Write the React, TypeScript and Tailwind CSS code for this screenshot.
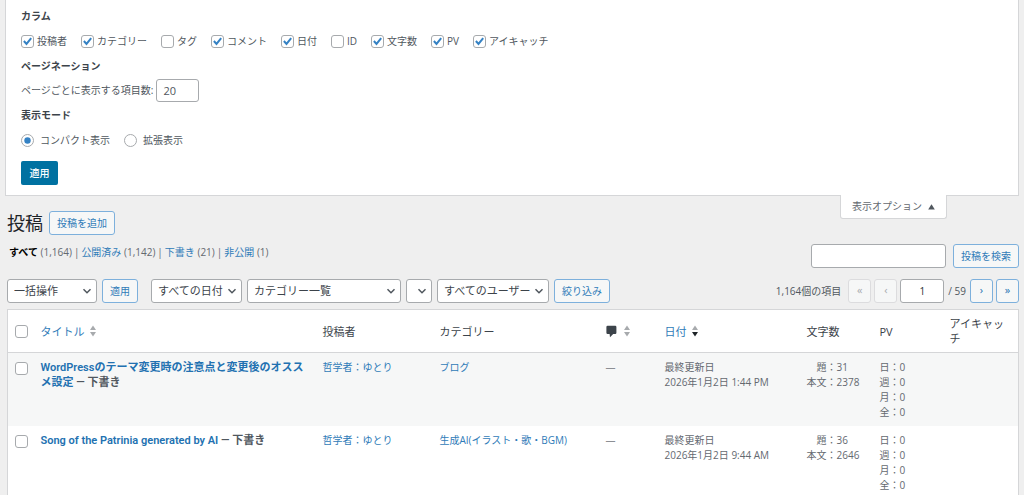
import React, { useState } from 'react';

const columnOptions = [
  { id: 'author', label: '投稿者', checked: true },
  { id: 'categories', label: 'カテゴリー', checked: true },
  { id: 'tags', label: 'タグ', checked: false },
  { id: 'comments', label: 'コメント', checked: true },
  { id: 'date', label: '日付', checked: true },
  { id: 'post-id', label: 'ID', checked: false },
  { id: 'count', label: '文字数', checked: true },
  { id: 'pv', label: 'PV', checked: true },
  { id: 'thumbnail', label: 'アイキャッチ', checked: true },
];

const views = [
  { label: 'すべて', count: '(1,164)', current: true },
  { label: '公開済み', count: '(1,142)' },
  { label: '下書き', count: '(21)' },
  { label: '非公開', count: '(1)' },
];

interface Post {
  id: number;
  title: string;
  category: string;
  date: string;
  titleCount: number;
  bodyCount: number;
}

const posts: Post[] = [
  {
    id: 1,
    title: 'WordPressのテーマ変更時の注意点と変更後のオススメ設定',
    category: 'ブログ',
    date: '2026年1月2日 1:44 PM',
    titleCount: 31,
    bodyCount: 2378,
  },
  {
    id: 2,
    title: 'Song of the Patrinia generated by AI',
    category: '生成AI(イラスト・歌・BGM)',
    date: '2026年1月2日 9:44 AM',
    titleCount: 36,
    bodyCount: 2646,
  },
];

const buttonClass =
  'h-6 shrink-0 rounded-[3px] border border-[#7db0dc] bg-[#f6f7f7] px-[7px] text-[10px] text-[#2f7bb8] whitespace-nowrap';

const Checkbox = ({ id, defaultChecked = false, label }: { id: string; defaultChecked?: boolean; label?: string }) => (
  <span className="relative block h-[13px] w-[13px] shrink-0">
    <input
      id={id}
      type="checkbox"
      aria-label={label}
      defaultChecked={defaultChecked}
      className="peer block h-[13px] w-[13px] appearance-none rounded-[3px] border border-[#a7aaad] bg-white"
    />
    <svg viewBox="0 0 13 13" className="pointer-events-none absolute inset-0 hidden h-full w-full peer-checked:block">
      <path d="M2.9 6 L5.5 9 L10.2 3.2" fill="none" stroke="#3582c4" strokeWidth="2" />
    </svg>
  </span>
);

const Radio = ({ id, defaultChecked = false }: { id: string; defaultChecked?: boolean }) => (
  <span className="relative block h-[13px] w-[13px] shrink-0">
    <input
      id={id}
      type="radio"
      name="mode"
      defaultChecked={defaultChecked}
      className="peer block h-[13px] w-[13px] appearance-none rounded-full border border-[#a7aaad] bg-white"
    />
    <svg viewBox="0 0 13 13" className="pointer-events-none absolute inset-0 hidden h-full w-full peer-checked:block">
      <circle cx="6.5" cy="6.5" r="3.2" fill="#3582c4" />
    </svg>
  </span>
);

const Select = ({ label, options, className }: { label: string; options: string[]; className: string }) => (
  <span className={`relative block h-6 shrink-0 ${className}`}>
    <select
      aria-label={label}
      className="block h-full w-full appearance-none rounded-[3px] border border-[#a7aaad] bg-white pl-1.5 text-[11px] text-[#3c434a]"
    >
      {options.map((option) => (
        <option key={option}>{option}</option>
      ))}
    </select>
    <svg viewBox="0 0 10 10" className="pointer-events-none absolute top-[7px] right-[5px] h-2.5 w-2.5">
      <path d="M1.5 3.2 L5 6.7 L8.5 3.2" fill="none" stroke="#50575e" strokeWidth="1.5" />
    </svg>
  </span>
);

const SortArrows = ({ down = false }: { down?: boolean }) => (
  <svg viewBox="0 0 8 12" className="h-3 w-2 shrink-0">
    <path d="M4 0.5 L7 5 H1 Z" fill="#a7aaad" />
    <path d="M4 11.5 L7 7 H1 Z" fill={down ? '#1d2327' : '#a7aaad'} />
  </svg>
);

const ScreenOptions = () => (
  <form className="mx-[5px] border border-t-0 border-[#d5d6d8] bg-white px-[15px] pt-1.5 pb-[10px] text-[10px] text-[#50575e]">
    <h2 className="h-5 leading-5 font-bold text-[#3c434a]">カラム</h2>
    <div className="flex h-[30px] items-center gap-3.5">
      {columnOptions.map((column) => (
        <div key={column.id} className="flex items-center gap-[3px]">
          <Checkbox id={column.id} defaultChecked={column.checked} />
          <label htmlFor={column.id}>{column.label}</label>
        </div>
      ))}
    </div>
    <h2 className="h-5 leading-5 font-bold text-[#3c434a]">ページネーション</h2>
    <div className="flex h-[29px] items-center gap-[3px]">
      <label htmlFor="per-page">ページごとに表示する項目数:</label>
      <input
        id="per-page"
        type="text"
        defaultValue="20"
        className="h-[23px] w-[43px] rounded-[3px] border border-[#a7aaad] px-1.5 text-[11px]"
      />
    </div>
    <h2 className="h-5 leading-5 font-bold text-[#3c434a]">表示モード</h2>
    <div className="flex h-[30px] items-center gap-3.5">
      <div className="flex items-center gap-1.5">
        <Radio id="compact" defaultChecked />
        <label htmlFor="compact">コンパクト表示</label>
      </div>
      <div className="flex items-center gap-1.5">
        <Radio id="extended" />
        <label htmlFor="extended">拡張表示</label>
      </div>
    </div>
    <button type="button" className="mt-1.5 block h-6 w-[37px] rounded-[2px] bg-[#0071a1] text-[10px] font-medium text-white">
      適用
    </button>
  </form>
);

const Pagination = () => (
  <div className="ml-auto flex items-center gap-[3px] text-[10px] text-[#50575e]">
    <span className="mr-1 whitespace-nowrap">1,164個の項目</span>
    {['«', '‹'].map((mark) => (
      <button key={mark} disabled className="h-6 w-[23px] rounded-[3px] border border-[#dcdcde] bg-[#f6f7f7] pb-0.5 text-[11px] text-[#a7aaad]">
        {mark}
      </button>
    ))}
    <input
      type="text"
      aria-label="現在のページ"
      defaultValue="1"
      className="h-6 w-11 rounded-[3px] border border-[#a7aaad] bg-white text-center text-[#2c3338]"
    />
    <span className="px-px whitespace-nowrap">/ 59</span>
    {['›', '»'].map((mark) => (
      <button key={mark} className="h-6 w-[23px] rounded-[3px] border border-[#7db0dc] bg-[#f6f7f7] pb-0.5 text-[11px] text-[#2271b1]">
        {mark}
      </button>
    ))}
  </div>
);

const PostsTable = () => (
  <table className="mt-1.5 w-full table-fixed border-collapse border border-[#d5d6d8] bg-white text-left text-[10px] leading-[15px] text-[#646970]">
    <colgroup>
      <col className="w-[26px]" />
      <col />
      <col className="w-[117px]" />
      <col className="w-[166px]" />
      <col className="w-[59px]" />
      <col className="w-[142px]" />
      <col className="w-[73px]" />
      <col className="w-[70px]" />
      <col className="w-[76px]" />
    </colgroup>
    <thead>
      <tr className="h-[43px] border-b border-[#d5d6d8] text-[11px] text-[#3c434a] [&>th]:px-[7px] [&>th]:font-normal">
        <th>
          <Checkbox id="select-all" label="すべて選択" />
        </th>
        <th>
          <a href="#title" className="flex items-center gap-1 text-[#2f7bb8]">
            タイトル
            <SortArrows />
          </a>
        </th>
        <th>投稿者</th>
        <th>カテゴリー</th>
        <th>
          <a href="#comments" aria-label="コメント" className="flex items-center gap-1.5">
            <svg viewBox="0 0 11 13" className="h-[13px] w-[11px] shrink-0">
              <path d="M1.6 0.8 H9.2 Q10.4 0.8 10.4 2 V7.8 Q10.4 9 9.2 9 H7.2 L4 12.2 L3.6 9 H1.6 Q0.4 9 0.4 7.8 V2 Q0.4 0.8 1.6 0.8 Z" fill="#3c434a" />
            </svg>
            <SortArrows />
          </a>
        </th>
        <th>
          <a href="#date" className="flex items-center gap-1 text-[#2f7bb8]">
            日付
            <SortArrows down />
          </a>
        </th>
        <th>文字数</th>
        <th>PV</th>
        <th>アイキャッチ</th>
      </tr>
    </thead>
    <tbody>
      {posts.map((post) => (
        <tr key={post.id} className="h-[73px] align-top odd:bg-[#f6f7f7] [&>td]:px-[7px] [&>td]:pt-[7px] [&>td]:pb-1.5">
          <td>
            <div className="pt-0.5">
              <Checkbox id={`post-${post.id}`} label={post.title} />
            </div>
          </td>
          <td className="font-['Roboto','Noto_Sans_CJK_JP',sans-serif] text-[11px] font-semibold text-[#50575e]">
            <a href="#edit" className="text-[#2271b1]">{post.title}</a> — 下書き
          </td>
          <td>
            <a href="#author" className="text-[#2f7bb8]">哲学者：ゆとり</a>
          </td>
          <td>
            <a href="#category" className="text-[#2f7bb8]">{post.category}</a>
          </td>
          <td className="text-[#8c8f94]">—</td>
          <td>
            最終更新日
            <br />
            {post.date}
          </td>
          <td className="whitespace-nowrap">
            {'\u3000'}題：{post.titleCount}
            <br />
            本文：{post.bodyCount}
          </td>
          <td>
            {['日', '週', '月', '全'].map((period) => (
              <div key={period}>{period}：0</div>
            ))}
          </td>
          <td />
        </tr>
      ))}
    </tbody>
  </table>
);

export default function App() {
  const [optionsOpen, setOptionsOpen] = useState(true);

  return (
    <div className="min-h-screen bg-[#efefef] font-['Open_Sans','Noto_Sans_CJK_JP',sans-serif] text-[#3c434a]">
      {optionsOpen && <ScreenOptions />}
      <div className="pr-[5px] pl-[7px]">
        <div className="flex items-start">
          <div className="flex items-center gap-1.5 pt-[15px]">
            <h1 className="text-lg leading-6 text-[#1d2327]">投稿</h1>
            <button className={buttonClass}>投稿を追加</button>
          </div>
          <button
            onClick={() => setOptionsOpen(!optionsOpen)}
            className="-mt-px mr-[72px] ml-auto flex h-6 w-[107px] items-center justify-center gap-1.5 rounded-b-[3px] border border-t-0 border-[#d5d6d8] bg-white text-[10px] text-[#646970]"
          >
            表示オプション
            <svg viewBox="0 0 7 6" className="h-1.5 w-[7px]">
              <path d="M3.5 0.3 L6.8 5.5 H0.2 Z" fill="#50575e" />
            </svg>
          </button>
        </div>

        <div className="mt-[9px] flex items-start justify-between">
          <ul className="flex pl-0.5 text-[10px] leading-4 text-[#646970]">
            {views.map((view, index) => (
              <li key={view.label}>
                {index > 0 && <span className="px-0.5">|</span>}
                <a href="#view" className={view.current ? 'font-bold text-black' : 'text-[#2f7bb8]'}>
                  {view.label}
                </a>{' '}
                {view.count}
              </li>
            ))}
          </ul>
          <div className="flex gap-[7px]">
            <input
              type="search"
              aria-label="投稿を検索"
              className="h-6 w-[135px] rounded-[3px] border border-[#a7aaad] bg-white px-1.5 text-[11px]"
            />
            <button className={buttonClass}>投稿を検索</button>
          </div>
        </div>

        <div className="mt-[11px] flex items-center gap-[5px]">
          <Select label="一括操作" options={['一括操作']} className="w-[90px]" />
          <button className={`${buttonClass} mr-2`}>適用</button>
          <Select label="日付で絞り込む" options={['すべての日付']} className="w-[91px]" />
          <Select label="カテゴリーで絞り込む" options={['カテゴリー一覧']} className="w-[154px]" />
          <Select label="タグで絞り込む" options={['']} className="w-[26px]" />
          <Select label="ユーザーで絞り込む" options={['すべてのユーザー']} className="w-[112px]" />
          <button className={buttonClass}>絞り込み</button>
          <Pagination />
        </div>

        <PostsTable />
      </div>
    </div>
  );
}
